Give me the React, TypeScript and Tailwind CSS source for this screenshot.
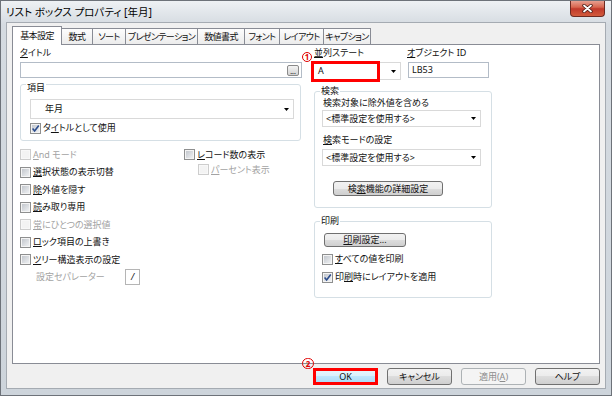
import type { ReactNode } from 'react'

const font = "font-['Noto_Sans','Noto_Sans_CJK_JP',sans-serif] [font-feature-settings:'palt']"

function U({ children }: { children: ReactNode }) {
  return <span className="underline decoration-1 underline-offset-[1px]">{children}</span>
}

function Arrow() {
  return (
    <svg width="5" height="3" viewBox="0 0 5 3" className="shrink-0">
      <path d="M0 0H5L2.5 3Z" fill="#000" />
    </svg>
  )
}

function Box({ checked, disabled }: { checked?: boolean; disabled?: boolean }) {
  return (
    <span
      className={`relative flex h-[11px] w-[11px] shrink-0 items-center justify-center border ${
        disabled ? 'border-[#cdcdcd] bg-[#f8f8f8]' : 'border-[#8e8f8f] bg-[#f4f4f4]'
      }`}
    >
      <span className={`h-[7px] w-[7px] ${disabled ? 'bg-[#f3f3f3]' : 'bg-[linear-gradient(135deg,#c3c7cd,#eef0f2)]'}`} />
      {checked && (
        <svg viewBox="0 0 9 9" className="absolute inset-0 h-[9px] w-[9px]">
          <path d="M1.6 4.6L3.6 6.9L7.8 1.4" fill="none" stroke="#2b4c8c" strokeWidth="1.6" />
        </svg>
      )}
    </span>
  )
}

function Check({
  children,
  checked,
  disabled,
  className = '',
}: {
  children: ReactNode
  checked?: boolean
  disabled?: boolean
  className?: string
}) {
  return (
    <div className={`flex items-center gap-[2px] whitespace-nowrap ${className}`}>
      <Box checked={checked} disabled={disabled} />
      <span className={disabled ? 'text-[#a3a3a3]' : ''}>{children}</span>
    </div>
  )
}

function Combo({ children, className = '' }: { children: ReactNode; className?: string }) {
  return (
    <div className={`flex items-center justify-between border border-[#d9d9d9] bg-white pr-[4px] ${className}`}>
      <span className="whitespace-nowrap">{children}</span>
      <Arrow />
    </div>
  )
}

function Button({
  children,
  className = '',
  disabled,
  primary,
}: {
  children: ReactNode
  className?: string
  disabled?: boolean
  primary?: boolean
}) {
  const skin = primary
    ? 'border-[#3c7fb1] bg-[linear-gradient(#eaf6fd,#d9f0fc_50%,#bee6fd_50%,#a7d9f5)]'
    : disabled
      ? 'border-[#adb2b5] bg-[#f4f4f4] text-[#8c8c8c]'
      : 'border-[#707070] bg-[linear-gradient(#f2f2f2,#ebebeb_50%,#dddddd_50%,#cfcfcf)]'
  return (
    <div className={`flex items-center justify-center whitespace-nowrap rounded-[3px] border ${skin} ${className}`}>
      {children}
    </div>
  )
}

function Group({
  label,
  children,
  className = '',
  labelTop = 'top-[-7px]',
}: {
  label: string
  children: ReactNode
  className?: string
  labelTop?: string
}) {
  return (
    <div className={`relative flex flex-col items-start rounded-[3px] border border-[#d5dfe5] ${className}`}>
      <span className={`absolute left-[5px] bg-white px-[1px] leading-[12px] ${labelTop}`}>{label}</span>
      {children}
    </div>
  )
}

// red callout number drawn over the screenshot
function Mark({ n, className }: { n: string; className: string }) {
  return (
    <span
      className={`absolute flex items-center justify-center rounded-full border-[1.5px] border-[#e00000] text-[8px] font-bold leading-none text-[#e00000] ${className}`}
    >
      {n}
    </span>
  )
}

const tabs = [
  { label: '基本設定', w: 'w-[50px]' },
  { label: '数式', w: 'w-[32px]' },
  { label: 'ソート', w: 'w-[34px]' },
  { label: 'プレゼンテーション', w: 'w-[73px]' },
  { label: '数値書式', w: 'w-[48px]' },
  { label: 'フォント', w: 'w-[36px]' },
  { label: 'レイアウト', w: 'w-[45px]' },
  { label: 'キャプション', w: 'w-[48px]' },
]

export default function App() {
  return (
    <div
      className={`${font} flex h-[396px] w-[612px] flex-col overflow-hidden border border-[#6d7279] bg-[linear-gradient(#eef1f4,#d5dbe1_24px,#cdd4db)] px-[5px] pb-[6px] text-[9px] leading-[12px] text-[#111]`}
    >
      {/* title bar */}
      <div className="-mx-[5px] flex h-[21px] items-start justify-between">
        <div className="self-center pl-[5px] text-[10.5px] text-black">リスト ボックス プロパティ [年月]</div>
        <div className="-mt-px mr-[6px] flex h-[17px] w-[35px] items-center justify-center rounded-b-[4px] border border-t-0 border-[#6e2a21] bg-[linear-gradient(#e9a99b,#d8664f_45%,#c0392b_55%,#d25b3c)]">
          <svg width="11" height="9" viewBox="0 0 11 9">
            <path d="M2 1.5L9 7.5M9 1.5L2 7.5" stroke="#4a1a12" strokeWidth="3.4" strokeLinecap="round" />
            <path d="M2 1.5L9 7.5M9 1.5L2 7.5" stroke="#fff" strokeWidth="1.8" strokeLinecap="round" />
          </svg>
        </div>
      </div>

      {/* client */}
      <div className="flex flex-1 flex-col border border-[#a5abb2] bg-[#f0f0f0]">
        {/* tabs */}
        <div className="ml-[5px] mt-[3px] flex h-[18px] items-end tracking-[-0.6px]">
          {tabs.map((t, i) =>
            i === 0 ? (
              <div
                key={t.label}
                className={`relative z-10 -mb-px flex h-[19px] ${t.w} items-center justify-center border border-b-0 border-[#898c95] bg-white`}
              >
                {t.label}
              </div>
            ) : (
              <div
                key={t.label}
                className={`-ml-px flex h-[16px] ${t.w} items-center justify-center whitespace-nowrap border border-b-0 border-[#898c95] bg-[linear-gradient(#fdfdfd,#ececec)]`}
              >
                {t.label}
              </div>
            ),
          )}
        </div>

        {/* panel */}
        <div className="ml-[5px] flex h-[320px] w-[588px] items-start border border-[#898c95] bg-white pl-[7px] pt-[2px]">
          {/* left column */}
          <div className="flex w-[282px] flex-col">
            <div className="h-[12px]">
              <U>タ</U>イトル
            </div>
            <div className="mt-[3px] flex h-[16px] items-center justify-end border border-[#b3bcc7] pr-[2px]">
              <div className="flex h-[11px] w-[12px] items-end justify-center rounded-[2px] border border-[#8a8a8a] bg-[linear-gradient(#f4f4f4,#d2d2d2)] text-[7px] leading-[7px]">
                ...
              </div>
            </div>

            <Group label="項目" labelTop="top-[-3px]" className="mt-[6px] w-[281px] pb-[6px] pl-[9px] pt-[14px]">
              <Combo className="h-[20px] w-[264px] pl-[14px]">年月</Combo>
              <Check checked className="mt-[3px] h-[12px]">
                タ<U>イ</U>トルとして使用
              </Check>
            </Group>

            <div className="mt-[5px] flex">
              <div className="flex w-[164px] flex-col">
                <Check disabled className="h-[17.5px]">
                  <U>A</U>nd モード
                </Check>
                <Check className="h-[17.5px]">
                  <U>選</U>択状態の表示切替
                </Check>
                <Check className="h-[17.5px]">
                  <U>除</U>外値を隠す
                </Check>
                <Check className="h-[17.5px]">
                  <U>読</U>み取り専用
                </Check>
                <Check disabled className="h-[17.5px]">
                  <U>常</U>にひとつの選択値
                </Check>
                <Check className="h-[17.5px]">
                  <U>ロ</U>ック項目の上書き
                </Check>
                <Check className="h-[17.5px]">
                  <U>ツ</U>リー構造表示の設定
                </Check>
                <div className="flex h-[17.5px] items-center pl-[16px]">
                  <span className="w-[89px] text-[#a3a3a3]">設定セパレーター</span>
                  <div className="flex h-[16px] w-[15px] items-center justify-center border border-[#b5b5b5] italic">/</div>
                </div>
              </div>
              <div className="flex flex-col">
                <Check className="h-[17px]">
                  <U>レ</U>コード数の表示
                </Check>
                <Check disabled className="ml-[14px] h-[13px]">
                  <U>パ</U>ーセント表示
                </Check>
              </div>
            </div>
          </div>

          {/* right column */}
          <div className="ml-[9px] flex w-[180px] flex-col">
            <div className="flex">
              <div className="relative flex w-[90px] flex-col">
                <div className="h-[12px] pl-[3px]">
                  <U>並</U>列ステート
                </div>
                <Combo className="mt-[3px] h-[18px] w-[90px] pl-[6px]">A</Combo>
                <div className="absolute left-0 top-[14px] h-[21px] w-[69px] border-[3px] border-[#ff0000]" />
                <Mark n="1" className="left-[-9px] top-[5px] h-[10px] w-[10px]" />
              </div>
              <div className="ml-[6px] flex flex-col">
                <div className="h-[12px]">
                  <U>オ</U>ブジェクト ID
                </div>
                <div className="ml-px mt-[3px] flex h-[16px] w-[81px] items-center border border-[#b3bcc7] pl-[3px]">
                  LB53
                </div>
              </div>
            </div>

            <Group label="検索" className="ml-[3px] mt-[11px] w-[178px] pb-[11px] pl-[8px] pt-[5px]">
              <div className="h-[12px]">検索対象に除外値を含める</div>
              <Combo className="-ml-px mt-px h-[17px] w-[159px] pl-[3px]">&lt;標準設定を使用する&gt;</Combo>
              <div className="mt-[7px] h-[12px]">
                <U>検</U>索モードの設定
              </div>
              <Combo className="-ml-px mt-[3px] h-[17px] w-[159px] pl-[3px]">&lt;標準設定を使用する&gt;</Combo>
              <Button className="ml-[10px] mt-[15px] h-[15px] w-[110px]">
                検<U>索</U>機能の詳細設定
              </Button>
            </Group>

            <Group label="印刷" className="ml-[3px] mt-[13px] w-[178px] pb-[14px] pl-[8px] pt-[11px]">
              <Button className="ml-px h-[14px] w-[82px]">
                <U>印</U>刷設定...
              </Button>
              <Check className="-ml-px mt-[6px] h-[12px]">
                <U>す</U>べての値を印刷
              </Check>
              <Check checked className="-ml-px mt-[6px] h-[12px]">
                印<U>刷</U>時にレイアウトを適用
              </Check>
            </Group>
          </div>
        </div>

        {/* dialog buttons */}
        <div className="mt-[4px] flex justify-end gap-[9px] pr-[5px]">
          <div className="relative">
            <Button primary className="h-[17px] w-[65px]">
              OK
            </Button>
            <div className="absolute inset-0 border-[3px] border-[#ff0000]" />
            <Mark n="2" className="left-[-11px] top-[-10px] h-[11px] w-[12px]" />
          </div>
          <Button className="h-[17px] w-[65px]">キャンセル</Button>
          <Button disabled className="h-[17px] w-[65px]">
            適用(<U>A</U>)
          </Button>
          <Button className="h-[17px] w-[65px]">ヘルプ</Button>
        </div>
      </div>
    </div>
  )
}
